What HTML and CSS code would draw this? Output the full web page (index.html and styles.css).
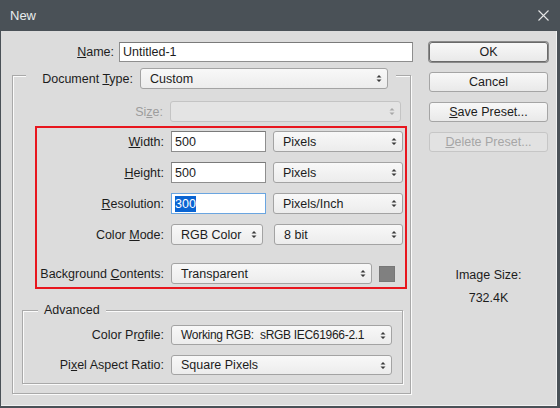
FILE: index.html
```html
<!DOCTYPE html>
<html>
<head>
<meta charset="utf-8">
<title>New</title>
<link rel="stylesheet" href="styles.css">
</head>
<body>
<div class="window">
  <div class="titlebar">
    <span class="title">New</span>
    <svg class="close" width="11" height="11" viewBox="0 0 11 11"><path d="M0.5 0.5 L10.5 10.5 M10.5 0.5 L0.5 10.5" stroke="#e6e6e6" stroke-width="1.1" fill="none"/></svg>
  </div>
  <div class="client">
    <div class="main">
      <div class="name-row">
        <span class="lbl name-lbl"><u>N</u>ame:</span>
        <div class="input name-input">Untitled-1</div>
      </div>
      <fieldset class="group outer">
        <legend class="doc-legend">
          <span class="lbl doc-lbl">Document <u>T</u>ype:</span>
          <div class="select doc-select"><span>Custom</span><svg class="arr" width="6" height="9" viewBox="0 0 6 9"><path d="M0.5 3.5 L3 1 L5.5 3.5 Z M0.5 5.5 L3 8 L5.5 5.5 Z" fill="#3a3a3a"/></svg></div>
        </legend>
        <div class="row size-row">
          <span class="lbl size-lbl disabled">Si<u>z</u>e:</span>
          <div class="select is-disabled size-select"><span></span><svg class="arr" width="6" height="9" viewBox="0 0 6 9"><path d="M0.5 3.5 L3 1 L5.5 3.5 Z M0.5 5.5 L3 8 L5.5 5.5 Z" fill="#a8a8a8"/></svg></div>
        </div>
        <div class="highlight">
          <div class="row">
            <span class="lbl hl-lbl"><u>W</u>idth:</span>
            <div class="input num-input">500</div>
            <div class="select unit-select"><span>Pixels</span><svg class="arr" width="6" height="9" viewBox="0 0 6 9"><path d="M0.5 3.5 L3 1 L5.5 3.5 Z M0.5 5.5 L3 8 L5.5 5.5 Z" fill="#3a3a3a"/></svg></div>
          </div>
          <div class="row gap10">
            <span class="lbl hl-lbl"><u>H</u>eight:</span>
            <div class="input num-input">500</div>
            <div class="select unit-select"><span>Pixels</span><svg class="arr" width="6" height="9" viewBox="0 0 6 9"><path d="M0.5 3.5 L3 1 L5.5 3.5 Z M0.5 5.5 L3 8 L5.5 5.5 Z" fill="#3a3a3a"/></svg></div>
          </div>
          <div class="row gap10">
            <span class="lbl hl-lbl"><u>R</u>esolution:</span>
            <div class="input num-input focused"><span class="sel-text">300</span></div>
            <div class="select unit-select"><span>Pixels/Inch</span><svg class="arr" width="6" height="9" viewBox="0 0 6 9"><path d="M0.5 3.5 L3 1 L5.5 3.5 Z M0.5 5.5 L3 8 L5.5 5.5 Z" fill="#3a3a3a"/></svg></div>
          </div>
          <div class="row gap10">
            <span class="lbl hl-lbl">Color <u>M</u>ode:</span>
            <div class="select mode-select"><span>RGB Color</span><svg class="arr" width="6" height="9" viewBox="0 0 6 9"><path d="M0.5 3.5 L3 1 L5.5 3.5 Z M0.5 5.5 L3 8 L5.5 5.5 Z" fill="#3a3a3a"/></svg></div>
            <div class="select bit-select"><span>8 bit</span><svg class="arr" width="6" height="9" viewBox="0 0 6 9"><path d="M0.5 3.5 L3 1 L5.5 3.5 Z M0.5 5.5 L3 8 L5.5 5.5 Z" fill="#3a3a3a"/></svg></div>
          </div>
          <div class="row gap18">
            <span class="lbl hl-lbl">Background <u>C</u>ontents:</span>
            <div class="select bg-select"><span>Transparent</span><svg class="arr" width="6" height="9" viewBox="0 0 6 9"><path d="M0.5 3.5 L3 1 L5.5 3.5 Z M0.5 5.5 L3 8 L5.5 5.5 Z" fill="#3a3a3a"/></svg></div>
            <div class="swatch"></div>
          </div>
        </div>
        <fieldset class="group advanced">
          <legend class="adv-legend">Advanced</legend>
          <div class="row adv-first">
            <span class="lbl adv-lbl">Color Pr<u>o</u>file:</span>
            <div class="select adv-select"><span class="tight">Working RGB:&nbsp; sRGB IEC61966-2.1</span><svg class="arr" width="6" height="9" viewBox="0 0 6 9"><path d="M0.5 3.5 L3 1 L5.5 3.5 Z M0.5 5.5 L3 8 L5.5 5.5 Z" fill="#3a3a3a"/></svg></div>
          </div>
          <div class="row gap10">
            <span class="lbl adv-lbl">Pi<u>x</u>el Aspect Ratio:</span>
            <div class="select adv-select"><span>Square Pixels</span><svg class="arr" width="6" height="9" viewBox="0 0 6 9"><path d="M0.5 3.5 L3 1 L5.5 3.5 Z M0.5 5.5 L3 8 L5.5 5.5 Z" fill="#3a3a3a"/></svg></div>
          </div>
        </fieldset>
      </fieldset>
    </div>
    <div class="side">
      <div class="btn default">OK</div>
      <div class="btn">Cancel</div>
      <div class="btn"><u>S</u>ave Preset...</div>
      <div class="btn is-disabled"><u>D</u>elete Preset...</div>
      <div class="image-size">
        <div>Image Size:</div>
        <div>732.4K</div>
      </div>
    </div>
  </div>
</div>
</body>
</html>
```

FILE: styles.css
```css
* { box-sizing: border-box; }

html, body {
  margin: 0;
  padding: 0;
}

body {
  font-family: "Liberation Sans", Arial, sans-serif;
  font-size: 12.5px;
  color: #1c1c1c;
  background: #4a5157;
}

u { text-decoration: underline; text-underline-offset: 1px; }

.window {
  width: 560px;
  height: 408px;
  background: #4a5157;
  display: flex;
  flex-direction: column;
}

.titlebar {
  height: 31px;
  flex: none;
  display: flex;
  align-items: center;
  justify-content: space-between;
  padding: 0 11px 1px 10px;
  color: #e9ecee;
  font-size: 13px;
}

.close { display: block; }

.client {
  flex: 1;
  margin: 0 3px 2px 1px;
  background: #dcdcdc;
  display: flex;
  border-right: 1px solid #f2f2f2;
  border-bottom: 1px solid #f2f2f2;
}

.main {
  width: 412px;
  flex: none;
}

.lbl {
  white-space: nowrap;
  text-align: right;
  flex: none;
}

.disabled { color: #9d9d9d; }

.row {
  display: flex;
  align-items: center;
}

.name-row {
  display: flex;
  align-items: center;
  margin-top: 11px;
  height: 20px;
}

.name-lbl { width: 113px; margin-right: 5px; }

.input {
  height: 21px;
  background: #fff;
  border: 1px solid #8e8e8e;
  border-top-color: #7a7a7a;
  padding-left: 3px;
  display: flex;
  align-items: center;
  flex: none;
}

.name-input { width: 294px; height: 20px; }

.group {
  margin: 0;
  padding: 0;
  border: 1px solid #a9a9a9;
  box-shadow: inset 1px 1px 0 #fbfbfb, 1px 1px 0 #fbfbfb;
  min-width: 0;
}

.outer {
  margin-left: 11px;
  width: 399px;
  height: 332px;
}

.doc-legend {
  margin-left: 13px;
  padding: 6px 8px 0 16px;
  display: flex;
  align-items: center;
  background: #dcdcdc;
}

.doc-lbl { width: 91px; margin-right: 7px; }

.select {
  height: 21px;
  border: 1px solid #a3a3a3;
  border-radius: 3px;
  background: linear-gradient(#f8f8f8, #ececec);
  display: flex;
  align-items: center;
  justify-content: space-between;
  padding: 0 5px 0 9px;
  flex: none;
  white-space: nowrap;
}

.select .arr { display: block; flex: none; }

.select.is-disabled {
  background: #e4e4e4;
  border-color: #c4c4c4;
}

.tight {
  font-size: 12px;
  letter-spacing: -0.3px;
}

.doc-select { width: 248px; }

.size-row { margin-top: 12px; }
.size-lbl { width: 150px; margin-right: 7px; }
.size-select { width: 231px; }

.highlight {
  margin: 4px 0 0 22px;
  width: 372px;
  border: 2px solid #e8161e;
  padding: 3px 0;
}

.gap10 { margin-top: 10px; }
.gap18 { margin-top: 18px; }

.hl-lbl { width: 127px; margin-right: 7px; }

.num-input { width: 95px; margin-right: 7px; }

.focused { border-color: #6aa5e0; }

.sel-text {
  background: #0a64d2;
  color: #fff;
  padding: 1px 0 0;
  line-height: 15px;
}

.unit-select { width: 130px; }
.mode-select { width: 92px; margin-right: 11px; }
.bit-select { width: 129px; }
.bg-select { width: 201px; margin-right: 7px; }

.swatch {
  width: 16px;
  height: 16px;
  background: #808080;
  border: 1px solid #777;
  flex: none;
}

.advanced {
  margin: 13px 0 8px 9px;
  width: 381px;
  padding-bottom: 8px;
}

.adv-legend {
  margin-left: 15px;
  padding: 0 6px;
  line-height: 16px;
  background: #dcdcdc;
}

.adv-first { margin-top: 7px; }

.adv-lbl { width: 141px; margin-right: 7px; }

.adv-select { width: 221px; height: 20px; }

.side {
  margin-left: 16px;
  width: 120px;
  padding-top: 11px;
  display: flex;
  flex-direction: column;
}

.btn {
  width: 119px;
  height: 20px;
  margin-bottom: 10px;
  border: 1px solid #a5a5a5;
  border-radius: 3px;
  background: linear-gradient(#f8f8f8, #e9e9e9);
  display: flex;
  align-items: center;
  justify-content: center;
  white-space: nowrap;
}

.btn.default {
  border-color: #6a6a6a;
  box-shadow: 0 0 0 1px #8a8a8a;
}

.btn.is-disabled {
  color: #a6a6a6;
  border-color: #c6c6c6;
  background: #e2e2e2;
}

.image-size {
  margin-top: 102px;
  line-height: 23px;
  text-align: center;
  width: 119px;
}
```
